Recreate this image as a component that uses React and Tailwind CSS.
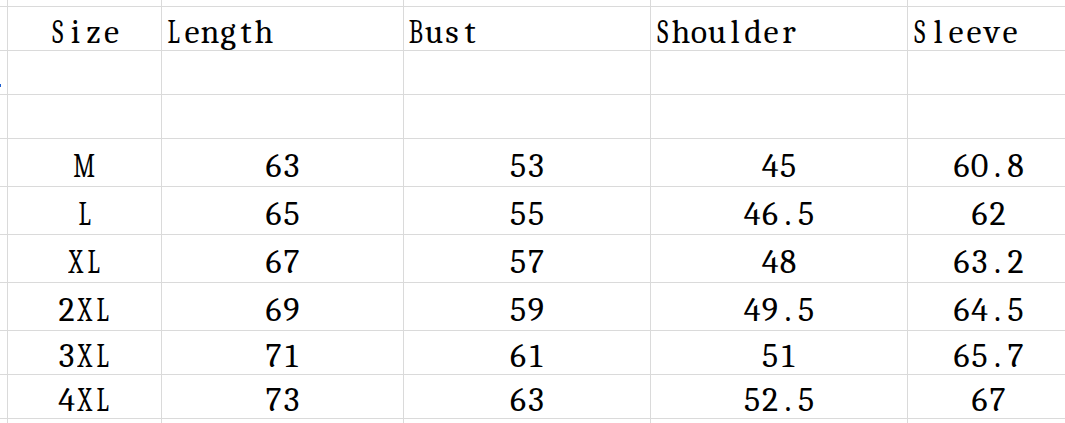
import React from 'react';

const columns = ['w-[8px]', 'w-[154px]', 'w-[242px]', 'w-[247px]', 'w-[257px]', 'w-[162px]'];

const header = ['Size', 'Length', 'Bust', 'Shoulder', 'Sleeve'];

const sizeRows = [
  { h: 'h-[48px]', cells: ['M', '63', '53', '45', '60.8'] },
  { h: 'h-[48px]', cells: ['L', '65', '55', '46.5', '62'] },
  { h: 'h-[48px]', cells: ['XL', '67', '57', '48', '63.2'] },
  { h: 'h-[48px]', cells: ['2XL', '69', '59', '49.5', '64.5'] },
  { h: 'h-[44px]', cells: ['3XL', '71', '61', '51', '65.7'] },
  { h: 'h-[44px]', cells: ['4XL', '73', '63', '52.5', '67'] },
];

// SimSun-like half-width text: every character sits in an 18px box,
// capitals are squeezed so they fit the box like the original font
const Mono = ({ text }) => (
  <span className="inline-flex whitespace-nowrap">
    {text.split('').map((ch, i) => (
      <span key={i} className="inline-flex justify-center w-[18px] shrink-0">
        {/[A-Z]/.test(ch) ? <span className="inline-block scale-x-[0.72]">{ch}</span> : ch}
      </span>
    ))}
  </span>
);

const Cell = ({ width, children, align = 'center', mark }) => (
  <div
    className={`${width} shrink-0 h-full border-r border-b border-[#dadada] flex items-center pt-[6px] relative ${
      align === 'left' ? 'justify-start pl-[3px]' : 'justify-center'
    }`}
  >
    {mark && <div className="absolute left-0 top-[33px] w-[1px] h-[3px] bg-[#1d5fd1]" />}
    {children}
  </div>
);

const Row = ({ h, cells, headerRow, mark }) => (
  <div className={`flex ${h}`}>
    <Cell width={columns[0]} mark={mark} />
    {cells.map((c, i) => (
      <Cell key={i} width={columns[i + 1]} align={headerRow && i > 0 ? 'left' : 'center'}>
        {c && <Mono text={c} />}
      </Cell>
    ))}
  </div>
);

const App = () => {
  return (
    <div className="w-[1065px] h-[423px] overflow-hidden bg-white text-black text-[34px] leading-none font-serif">
      <Row h="h-[7px]" cells={['', '', '', '', '']} />
      <Row h="h-[44px]" cells={header} headerRow />
      <Row h="h-[44px]" cells={['', '', '', '', '']} mark />
      <Row h="h-[44px]" cells={['', '', '', '', '']} />
      {sizeRows.map((r, i) => (
        <Row key={i} h={r.h} cells={r.cells} />
      ))}
      <Row h="h-[20px]" cells={['', '', '', '', '']} />
    </div>
  );
};

export default App;
